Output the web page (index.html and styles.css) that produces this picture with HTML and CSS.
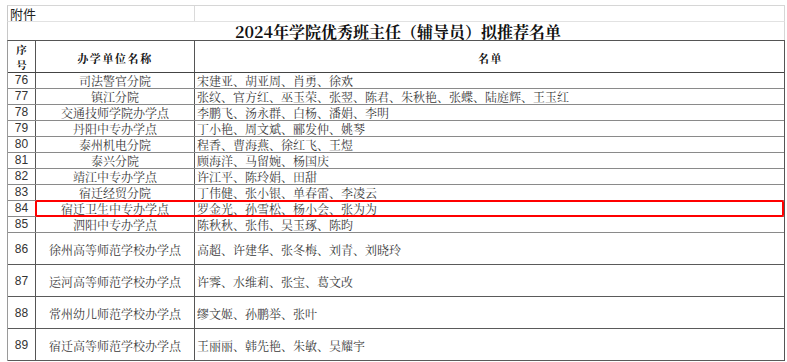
FILE: index.html
```html
<!DOCTYPE html>
<html lang="zh-CN">
<head>
<meta charset="utf-8">
<title>2024年学院优秀班主任（辅导员）拟推荐名单</title>
<link rel="stylesheet" href="styles.css">
</head>
<body>
<div class="sheet">
  <div class="attach-row">
    <div class="attach-cell">附件</div>
    <div class="attach-rest"></div>
  </div>
  <div class="title-row">2024年学院优秀班主任（辅导员）拟推荐名单</div>
  <div class="table">
    <div class="row head">
      <div class="c num"><span class="stack">序</span><span class="stack">号</span></div>
      <div class="c unit">办学单位名称</div>
      <div class="c names">名单</div>
    </div>
    <div class="row"><div class="c num">76</div><div class="c unit">司法警官分院</div><div class="c names">宋建亚、胡亚周、肖勇、徐欢</div></div>
    <div class="row"><div class="c num">77</div><div class="c unit">镇江分院</div><div class="c names">张纹、官方红、巫玉荣、张翌、陈君、朱秋艳、张蝶、陆庭辉、王玉红</div></div>
    <div class="row"><div class="c num">78</div><div class="c unit">交通技师学院办学点</div><div class="c names">李鹏飞、汤永群、白杨、潘娟、李明</div></div>
    <div class="row"><div class="c num">79</div><div class="c unit">丹阳中专办学点</div><div class="c names">丁小艳、周文斌、郦发仲、姚琴</div></div>
    <div class="row"><div class="c num">80</div><div class="c unit">泰州机电分院</div><div class="c names">程香、曹海燕、徐红飞、王煜</div></div>
    <div class="row"><div class="c num">81</div><div class="c unit">泰兴分院</div><div class="c names">顾海洋、马留婉、杨国庆</div></div>
    <div class="row"><div class="c num">82</div><div class="c unit">靖江中专办学点</div><div class="c names">许江平、陈玲娟、田甜</div></div>
    <div class="row"><div class="c num">83</div><div class="c unit">宿迁经贸分院</div><div class="c names">丁伟健、张小银、单春雷、李凌云</div></div>
    <div class="row"><div class="c num">84</div><div class="c unit">宿迁卫生中专办学点</div><div class="c names">罗金光、孙雪松、杨小会、张为为</div></div>
    <div class="row"><div class="c num">85</div><div class="c unit">泗阳中专办学点</div><div class="c names">陈秋秋、张伟、吴玉琢、陈昀</div></div>
    <div class="row tall"><div class="c num">86</div><div class="c unit">徐州高等师范学校办学点</div><div class="c names">高超、许建华、张冬梅、刘青、刘晓玲</div></div>
    <div class="row tall"><div class="c num">87</div><div class="c unit">运河高等师范学校办学点</div><div class="c names">许霁、水维莉、张宝、葛文改</div></div>
    <div class="row tall"><div class="c num">88</div><div class="c unit">常州幼儿师范学校办学点</div><div class="c names">缪文姬、孙鹏举、张叶</div></div>
    <div class="row tall"><div class="c num">89</div><div class="c unit">宿迁高等师范学校办学点</div><div class="c names">王丽丽、韩先艳、朱敏、吴耀宇</div></div>
  </div>
  <div class="highlight"></div>
</div>
</body>
</html>
```
FILE: styles.css
```css
html, body {
  margin: 0;
  padding: 0;
  background: #ffffff;
}

body {
  font-family: "Noto Serif CJK SC", "Noto Sans CJK SC", serif;
  color: #3a3a3a;
}

.sheet {
  position: relative;
  margin: 5px 0 0 7px;
  width: 778px;
}

.attach-row {
  display: flex;
  height: 16px;
  box-sizing: border-box;
  border-top: 1px solid #d6d6d6;
  border-left: 1px solid #c8c8c8;
  border-right: 1px solid #d6d6d6;
}

.attach-cell {
  width: 187px;
  box-sizing: border-box;
  border-right: 1px solid #dadada;
  padding-left: 2px;
  font-family: "Noto Sans CJK SC", sans-serif;
  font-size: 13px;
  line-height: 15px;
  color: #222;
}

.attach-rest {
  flex: 1;
}

.title-row {
  height: 19px;
  box-sizing: border-box;
  border-top: 1px solid #e2e2e2;
  border-left: 1px solid #c8c8c8;
  border-right: 1px solid #d6d6d6;
  text-align: center;
  font-family: "Noto Serif CJK SC", "Noto Sans CJK SC", serif;
  font-weight: 700;
  font-size: 16px;
  line-height: 19px;
  color: #111;
  padding-left: 4px;
}

.table {
  border-top: 1px solid #555;
  border-left: 1px solid #9a9a9a;
  border-right: 1px solid #555;
}

.row {
  display: grid;
  grid-template-columns: 28px 159px 589px;
  height: 16px;
  box-sizing: border-box;
  border-bottom: 1px solid #8a8a8a;
}

.row.head {
  height: 32px;
  border-bottom: 1px solid #444;
}

.row.tall {
  height: 32px;
  border-bottom: 1px solid #5a5a5a;
}

.c {
  display: flex;
  align-items: center;
  box-sizing: border-box;
  font-size: 12px;
  line-height: 15px;
  white-space: nowrap;
  overflow: hidden;
}

.c.num {
  justify-content: center;
  border-right: 1px solid #555;
  font-family: "Liberation Sans", Arial, sans-serif;
  color: #333;
}

.c.unit {
  justify-content: center;
  border-right: 1px solid #555;
}

.c.names {
  padding-left: 2px;
}

.row.tall .c {
  padding-top: 2px;
}

.row.head .c {
  font-weight: 700;
  color: #111;
  font-size: 11px;
  padding-top: 4px;
}

.row.head .c.num {
  flex-direction: column;
  justify-content: center;
  font-family: "Noto Serif CJK SC", "Noto Sans CJK SC", serif;
  font-size: 10.5px;
  line-height: 15.5px;
  padding-top: 1px;
}

.stack {
  display: block;
  height: 15.5px;
}

.row.head .c.unit,
.row.head .c.names {
  letter-spacing: 1.6px;
  justify-content: center;
}

.highlight {
  position: absolute;
  left: 28px;
  top: 195px;
  width: 749px;
  height: 17px;
  box-sizing: border-box;
  border: 2px solid #ff0000;
  border-radius: 2px;
}
```
